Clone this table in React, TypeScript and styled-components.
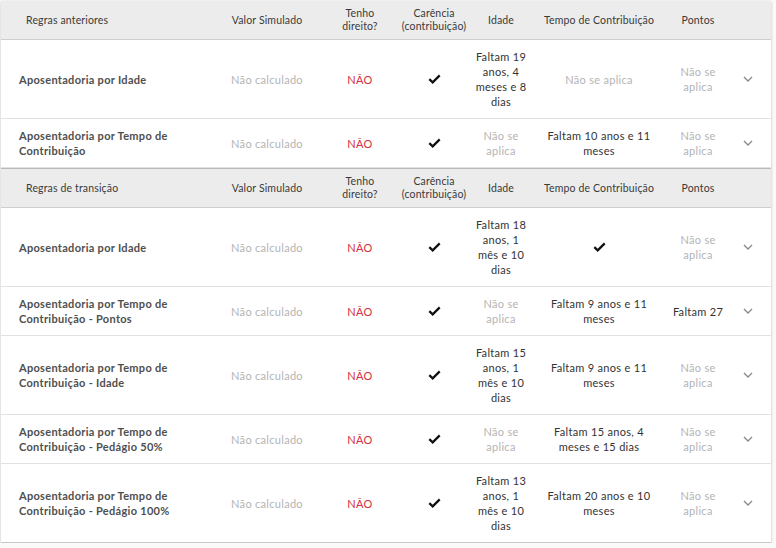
import React from "react";
import styled, { createGlobalStyle } from "styled-components";

const Global = createGlobalStyle`
  html, body { margin: 0; padding: 0; background: #fafafa; }
  body { font-family: Lato, "Noto Sans", Arial, sans-serif; }
`;

const COLS = "214px 104px 82px 66px 68px 128px 70px 30px";

const Card = styled.div`
  margin: 1px 0 0 1px;
  width: 770px;
  background: #fff;
  box-shadow: 0 1px 3px rgba(0, 0, 0, 0.22);
`;

const HeaderRow = styled.div<{ $first?: boolean }>`
  display: grid;
  grid-template-columns: ${COLS};
  padding-right: 8px;
  height: 38px;
  background: #ececec;
  border-bottom: 1px solid #cfcfcf;
  border-top: ${(p) => (p.$first ? "none" : "1px solid #b9b9b9")};
  align-items: center;
`;

const HeadCell = styled.div<{ $left?: boolean }>`
  font-size: 10.5px;
  line-height: 13px;
  letter-spacing: 0.15px;
  color: #3a3a3a;
  text-align: ${(p) => (p.$left ? "left" : "center")};
  padding-left: ${(p) => (p.$left ? "25px" : "0")};
`;

const Row = styled.div<{ $last?: boolean }>`
  display: grid;
  grid-template-columns: ${COLS};
  padding-right: 8px;
  align-items: center;
  min-height: 48px;
  border-bottom: ${(p) => (p.$last ? "1px solid #c8c8c8" : "1px solid #e2e2e2")};
`;

const Cell = styled.div<{ $tone?: "muted" | "dark" | "red" }>`
  font-size: 11px;
  line-height: 15px;
  letter-spacing: 0.3px;
  text-align: center;
  padding: 9px 5px;
  color: ${(p) =>
    p.$tone === "muted" ? "#b4b4b4" : p.$tone === "red" ? "#d4303a" : "#333"};
`;

const NameCell = styled.div`
  font-size: 11px;
  line-height: 15px;
  letter-spacing: 0.3px;
  font-weight: 700;
  color: #4f4f4f;
  padding: 9px 28px 9px 18px;
`;

const IconCell = styled.div`
  display: flex;
  justify-content: center;
  align-items: center;
`;

const Check = () => (
  <svg width="13" height="10" viewBox="0 0 13 10">
    <path d="M1.3 5.2 L4.7 8.4 L11.7 1.4" fill="none" stroke="#111" strokeWidth="2.3" />
  </svg>
);

const Chevron = () => (
  <svg width="10" height="6" viewBox="0 0 10 6">
    <path d="M1 1 L5 5 L9 1" fill="none" stroke="#8a8a8a" strokeWidth="1.4" />
  </svg>
);

type Val = { text?: string; muted?: boolean; check?: boolean };

type RowData = {
  name: string;
  idade: Val;
  tempo: Val;
  pontos: Val;
};

const NA: Val = { text: "Não se aplica", muted: true };

const anteriores: RowData[] = [
  {
    name: "Aposentadoria por Idade",
    idade: { text: "Faltam 19 anos, 4 meses e 8 dias" },
    tempo: NA,
    pontos: NA,
  },
  {
    name: "Aposentadoria por Tempo de Contribuição",
    idade: NA,
    tempo: { text: "Faltam 10 anos e 11 meses" },
    pontos: NA,
  },
];

const transicao: RowData[] = [
  {
    name: "Aposentadoria por Idade",
    idade: { text: "Faltam 18 anos, 1 mês e 10 dias" },
    tempo: { check: true },
    pontos: NA,
  },
  {
    name: "Aposentadoria por Tempo de Contribuição - Pontos",
    idade: NA,
    tempo: { text: "Faltam 9 anos e 11 meses" },
    pontos: { text: "Faltam 27" },
  },
  {
    name: "Aposentadoria por Tempo de Contribuição - Idade",
    idade: { text: "Faltam 15 anos, 1 mês e 10 dias" },
    tempo: { text: "Faltam 9 anos e 11 meses" },
    pontos: NA,
  },
  {
    name: "Aposentadoria por Tempo de Contribuição - Pedágio 50%",
    idade: NA,
    tempo: { text: "Faltam 15 anos, 4 meses e 15 dias" },
    pontos: NA,
  },
  {
    name: "Aposentadoria por Tempo de Contribuição - Pedágio 100%",
    idade: { text: "Faltam 13 anos, 1 mês e 10 dias" },
    tempo: { text: "Faltam 20 anos e 10 meses" },
    pontos: NA,
  },
];

const ValueCell = ({ v }: { v: Val }) =>
  v.check ? (
    <IconCell>
      <Check />
    </IconCell>
  ) : (
    <Cell $tone={v.muted ? "muted" : "dark"}>{v.text}</Cell>
  );

const Header = ({ title, first }: { title: string; first?: boolean }) => (
  <HeaderRow $first={first}>
    <HeadCell $left>{title}</HeadCell>
    <HeadCell>Valor Simulado</HeadCell>
    <HeadCell>
      Tenho
      <br />
      direito?
    </HeadCell>
    <HeadCell>
      Carência
      <br />
      (contribuição)
    </HeadCell>
    <HeadCell>Idade</HeadCell>
    <HeadCell>Tempo de Contribuição</HeadCell>
    <HeadCell>Pontos</HeadCell>
    <HeadCell />
  </HeaderRow>
);

const DataRow = ({ r, last }: { r: RowData; last?: boolean }) => (
  <Row $last={last}>
    <NameCell>{r.name}</NameCell>
    <Cell $tone="muted">Não calculado</Cell>
    <Cell $tone="red">NÃO</Cell>
    <IconCell>
      <Check />
    </IconCell>
    <ValueCell v={r.idade} />
    <ValueCell v={r.tempo} />
    <ValueCell v={r.pontos} />
    <IconCell>
      <Chevron />
    </IconCell>
  </Row>
);

export default function App() {
  return (
    <>
      <Global />
      <Card>
        <Header title="Regras anteriores" first />
        {anteriores.map((r, i) => (
          <DataRow key={"a" + i} r={r} />
        ))}
        <Header title="Regras de transição" />
        {transicao.map((r, i) => (
          <DataRow key={"t" + i} r={r} last={i === transicao.length - 1} />
        ))}
      </Card>
    </>
  );
}
